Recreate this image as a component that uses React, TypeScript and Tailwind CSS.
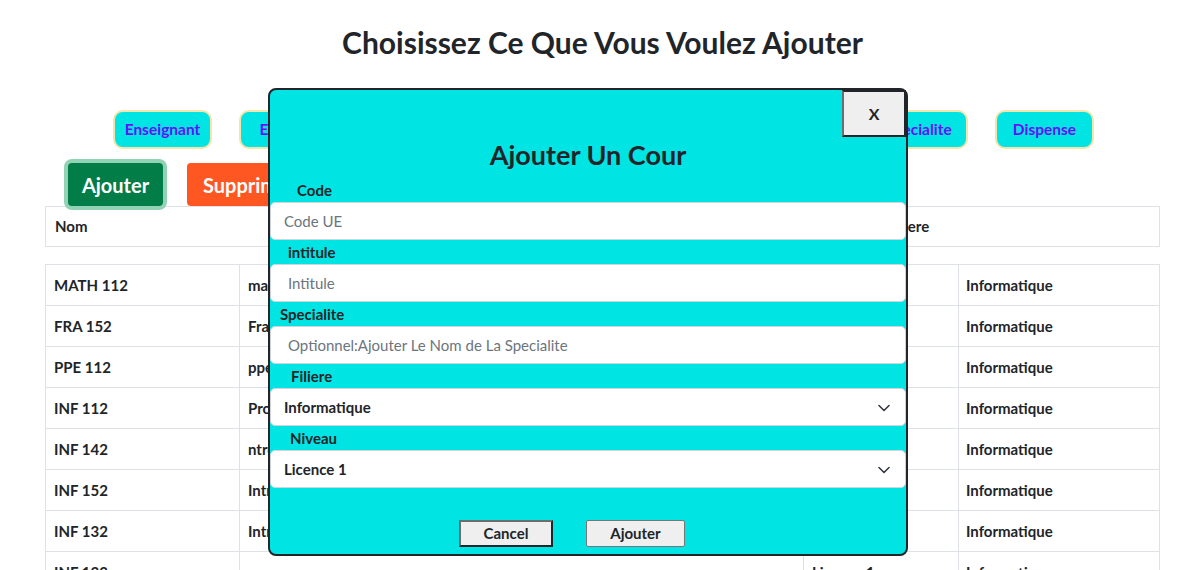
import React from "react";

const tabs = ["Enseignant", "Etudiant", "Cours", "Filiere", "Niveau", "Salle", "Specialite", "Dispense"];

const rows = [
  ["MATH 112", "mathematiques generales", "Licence 1", "Informatique"],
  ["FRA 152", "Francais", "Licence 1", "Informatique"],
  ["PPE 112", "ppe", "Licence 1", "Informatique"],
  ["INF 112", "Programmation", "Licence 1", "Informatique"],
  ["INF 142", "ntroduction aux reseaux", "Licence 1", "Informatique"],
  ["INF 152", "Introduction aux bases de donnees", "Licence 1", "Informatique"],
  ["INF 132", "Introduction aux systemes", "Licence 1", "Informatique"],
  ["INF 133", "", "Licence 1", "Informatique"],
];

function Chevron() {
  return (
    <svg width="12" height="8" viewBox="0 0 12 8" className="pointer-events-none absolute right-[16px] top-[16px]">
      <path d="M1 1.5l5 5 5-5" fill="none" stroke="#343a40" strokeWidth="1.6" strokeLinecap="round" strokeLinejoin="round" />
    </svg>
  );
}

export default function App() {
  return (
    <div className="relative min-h-[570px] bg-white text-[#212529] font-['Lato','Noto_Sans',sans-serif]">
      <h1 className="pt-[24px] pl-[26px] text-center text-[30px] leading-[36px] font-bold">
        Choisissez Ce Que Vous Voulez Ajouter
      </h1>

      {/* tabs */}
      <div className="mt-[50px] flex gap-[27px] pl-[113px]">
        {tabs.map((t) => (
          <button
            key={t}
            className="h-[39px] w-[99px] rounded-[10px] border-2 border-[#f3e5ab] bg-[#00e4e4] text-[15.5px] font-bold text-[#6a0dfb]"
          >
            {t}
          </button>
        ))}
      </div>

      {/* actions */}
      <div className="mt-[14px] flex gap-[24px] pl-[68px]">
        <button className="h-[43px] w-[95px] rounded-[4px] bg-[#037d47] text-[20px] font-bold text-white shadow-[0_0_0_4px_#93d3b5]">
          Ajouter
        </button>
        <button className="h-[43px] px-[16px] rounded-[4px] bg-[#ff5722] text-[20px] font-bold text-white">
          Supprimer
        </button>
      </div>

      {/* table header */}
      <div className="ml-[45px] flex h-[41px] w-[1115px] items-center border border-[#dee2e6] text-[15px] font-bold">
        <div className="w-[300px] pl-[9px]">Nom</div>
        <div className="w-[300px] pl-[9px]">Intitule</div>
        <div className="w-[233px] pl-[9px]">Niveau</div>
        <div className="pl-[9px]">Filiere</div>
      </div>

      {/* table body */}
      <table className="ml-[45px] mt-[17px] w-[1115px] border-collapse text-[15px] font-bold">
        <tbody>
          {rows.map((r, i) => (
            <tr key={i} className="h-[41px]">
              <td className="w-[194px] border border-[#dee2e6] pl-[8px]">{r[0]}</td>
              <td className="w-[564px] border border-[#dee2e6] pl-[8px]">{r[1]}</td>
              <td className="w-[155px] border border-[#dee2e6] pl-[8px]">{r[2]}</td>
              <td className="border border-[#dee2e6] pl-[7px]">{r[3]}</td>
            </tr>
          ))}
        </tbody>
      </table>

      {/* modal */}
      <div className="absolute left-[268px] top-[88px] w-[640px] h-[468px] rounded-lg border-2 border-[#212529] bg-[#00e4e4]">
        <button className="absolute right-0 top-0 h-[47px] w-[64px] border-2 border-[#212529] border-l-[#6d6d6d] bg-[#efefef] text-[16px] font-bold">
          X
        </button>
        <h2 className="pt-[48px] text-center text-[27px] leading-[34px] font-bold">Ajouter Un Cour</h2>
        <form className="mt-[6px] flex flex-col text-[15px]">
          <label className="h-[24px] leading-[24px] pl-[27px] font-bold">Code</label>
          <input
            placeholder="Code UE"
            className="h-[38px] rounded-[5px] border border-[#ced4da] bg-white px-[13px] placeholder:text-[#6c757d]"
          />
          <label className="h-[24px] leading-[24px] pl-[18px] font-bold">intitule</label>
          <input
            placeholder="Intitule"
            className="h-[38px] rounded-[5px] border border-[#ced4da] bg-white px-[17px] placeholder:text-[#6c757d]"
          />
          <label className="h-[24px] leading-[24px] pl-[10px] font-bold">Specialite</label>
          <input
            placeholder="Optionnel:Ajouter Le Nom de La Specialite"
            className="h-[38px] rounded-[5px] border border-[#ced4da] bg-white px-[17px] placeholder:text-[#6c757d]"
          />
          <label className="h-[24px] leading-[24px] pl-[21px] font-bold">Filiere</label>
          <div className="relative">
            <select className="h-[38px] w-full appearance-none rounded-[5px] border border-[#ced4da] bg-white px-[13px] font-bold">
              <option>Informatique</option>
            </select>
            <Chevron />
          </div>
          <label className="h-[24px] leading-[24px] pl-[20px] font-bold">Niveau</label>
          <div className="relative">
            <select className="h-[38px] w-full appearance-none rounded-[5px] border border-[#ced4da] bg-white px-[13px] font-bold">
              <option>Licence 1</option>
            </select>
            <Chevron />
          </div>
          <div className="mt-[32px] flex justify-center gap-[33px] pr-[32px]">
            <button
              type="button"
              className="h-[27px] w-[94px] border-2 border-[#6d6d6d] border-b-[#212529] border-r-[#212529] bg-[#efefef] font-bold"
            >
              Cancel
            </button>
            <button type="button" className="h-[27px] w-[99px] rounded-[2px] border border-[#767676] bg-[#efefef] font-bold">
              Ajouter
            </button>
          </div>
        </form>
      </div>
    </div>
  );
}
